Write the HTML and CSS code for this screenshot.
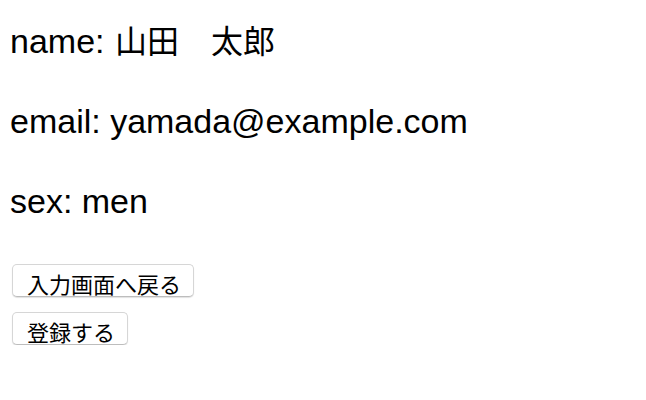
FILE: index.html
```html
<!DOCTYPE html>
<html lang="ja">
<head>
<meta charset="utf-8">
<title>確認画面</title>
<link rel="stylesheet" href="styles.css">
</head>
<body>
<main class="page">
  <div class="fields">
    <p class="field">name: <span class="ja">山田　太郎</span></p>
    <p class="field">email: yamada@example.com</p>
    <p class="field">sex: men</p>
  </div>
  <div class="actions">
    <button class="btn" type="button">入力画面へ戻る</button>
    <button class="btn" type="submit">登録する</button>
  </div>
</main>
</body>
</html>
```
FILE: styles.css
```css
html, body {
  margin: 0;
  padding: 0;
  background: #ffffff;
}

.page {
  padding: 17px 0 0 10px;
  font-family: "Liberation Sans", "Noto Sans CJK JP", sans-serif;
  color: #000;
}

.fields {
  display: flex;
  flex-direction: column;
  gap: 32px;
}

.field {
  margin: 0;
  font-size: 34px;
  line-height: 48px;
}

.ja {
  font-family: "Noto Sans CJK JP", sans-serif;
  font-size: 32px;
  line-height: 1;
  margin-left: 1px;
}

.actions {
  margin-top: 39px;
  display: flex;
  flex-direction: column;
  align-items: flex-start;
  gap: 15px;
}

.btn {
  margin: 0 0 0 2px;
  box-sizing: border-box;
  height: 33px;
  padding: 7px 12px 2px 14px;
  font-family: "Noto Sans CJK JP", "Liberation Sans", sans-serif;
  font-size: 22px;
  line-height: 22px;
  color: #000;
  background: #ffffff;
  border: 1px solid #d6d6d6;
  border-bottom-color: #bdbdbd;
  border-radius: 5px;
  box-shadow: 0 1px 1px rgba(0, 0, 0, 0.12);
  display: flex;
  align-items: flex-start;
}
```
